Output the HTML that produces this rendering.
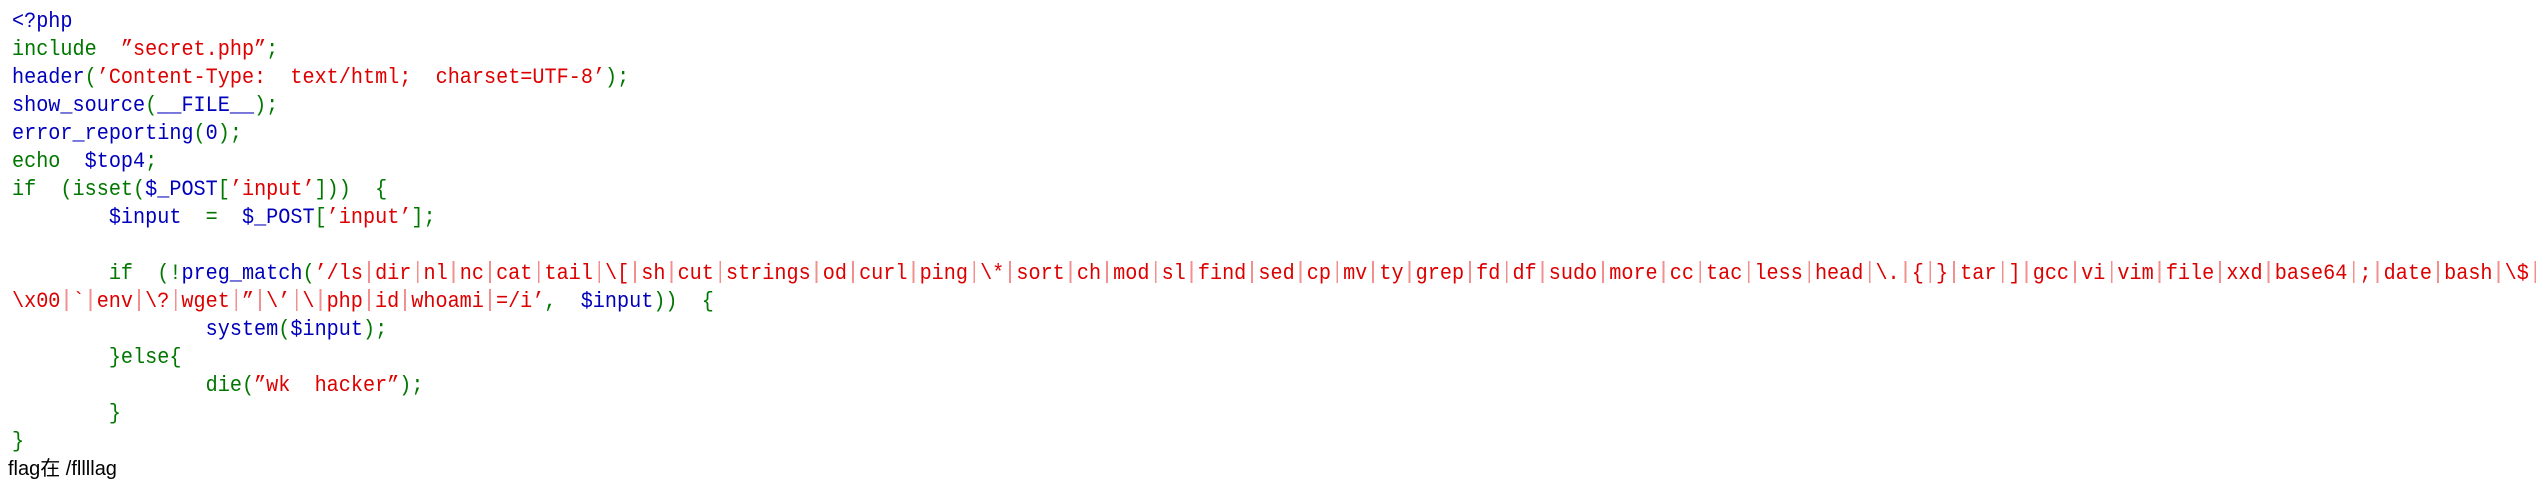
<!DOCTYPE html>
<html><head><meta charset="utf-8">
<style>
html,body{margin:0;padding:0;background:#fff;width:2543px;height:492px;overflow:hidden}
#c{position:absolute;left:12px;top:8px;font-family:"Liberation Mono",monospace;font-size:22px;line-height:28px;white-space:pre;transform:scaleX(0.9167);transform-origin:0 0;color:#0000BB}
.g{color:#007700}.r{color:#DD0000}.k{color:#0000BB}
i{font-style:normal}
.b{display:inline-block;width:13.2px;height:22px;vertical-align:-4px;background:linear-gradient(to right,transparent 5.6px,#f29090 5.6px,#f29090 7.6px,transparent 7.6px)}
#f{position:absolute;left:8px;top:456px;font-family:"Liberation Sans","Noto Sans CJK SC",sans-serif;font-size:20px;color:#000;line-height:26px}
</style></head><body>
<div id="c"><span class="k">&lt;?php</span>
<span class="g">include  </span><span class="r">”secret.php”</span><span class="g">;</span>
<span class="k">header</span><span class="g">(</span><span class="r">’Content-Type:  text/html;  charset=UTF-8’</span><span class="g">);</span>
<span class="k">show_source</span><span class="g">(</span><span class="k">__FILE__</span><span class="g">);</span>
<span class="k">error_reporting</span><span class="g">(</span><span class="k">0</span><span class="g">);</span>
<span class="g">echo  </span><span class="k">$top4</span><span class="g">;</span>
<span class="g">if  (isset(</span><span class="k">$_POST</span><span class="g">[</span><span class="r">’input’</span><span class="g">]))  {</span>
        <span class="k">$input  </span><span class="g">=  </span><span class="k">$_POST</span><span class="g">[</span><span class="r">’input’</span><span class="g">];</span>

        <span class="g">if  (!</span><span class="k">preg_match</span><span class="g">(</span><span class="r">’/ls<i class="b"></i>dir<i class="b"></i>nl<i class="b"></i>nc<i class="b"></i>cat<i class="b"></i>tail<i class="b"></i>\[<i class="b"></i>sh<i class="b"></i>cut<i class="b"></i>strings<i class="b"></i>od<i class="b"></i>curl<i class="b"></i>ping<i class="b"></i>\*<i class="b"></i>sort<i class="b"></i>ch<i class="b"></i>mod<i class="b"></i>sl<i class="b"></i>find<i class="b"></i>sed<i class="b"></i>cp<i class="b"></i>mv<i class="b"></i>ty<i class="b"></i>grep<i class="b"></i>fd<i class="b"></i>df<i class="b"></i>sudo<i class="b"></i>more<i class="b"></i>cc<i class="b"></i>tac<i class="b"></i>less<i class="b"></i>head<i class="b"></i>\.<i class="b"></i>{<i class="b"></i>}<i class="b"></i>tar<i class="b"></i>]<i class="b"></i>gcc<i class="b"></i>vi<i class="b"></i>vim<i class="b"></i>file<i class="b"></i>xxd<i class="b"></i>base64<i class="b"></i>;<i class="b"></i>date<i class="b"></i>bash<i class="b"></i>\$<i class="b"></i></span>
<span class="r">\x00<i class="b"></i>`<i class="b"></i>env<i class="b"></i>\?<i class="b"></i>wget<i class="b"></i>”<i class="b"></i>\’<i class="b"></i>\<i class="b"></i>php<i class="b"></i>id<i class="b"></i>whoami<i class="b"></i>=/i’</span><span class="g">,  </span><span class="k">$input</span><span class="g">))  {</span>
                <span class="k">system</span><span class="g">(</span><span class="k">$input</span><span class="g">);</span>
        <span class="g">}else{</span>
                <span class="g">die(</span><span class="r">”wk  hacker”</span><span class="g">);</span>
        <span class="g">}</span>
<span class="g">}</span></div>
<div id="f">flag在 /fllllag</div>
</body></html>
